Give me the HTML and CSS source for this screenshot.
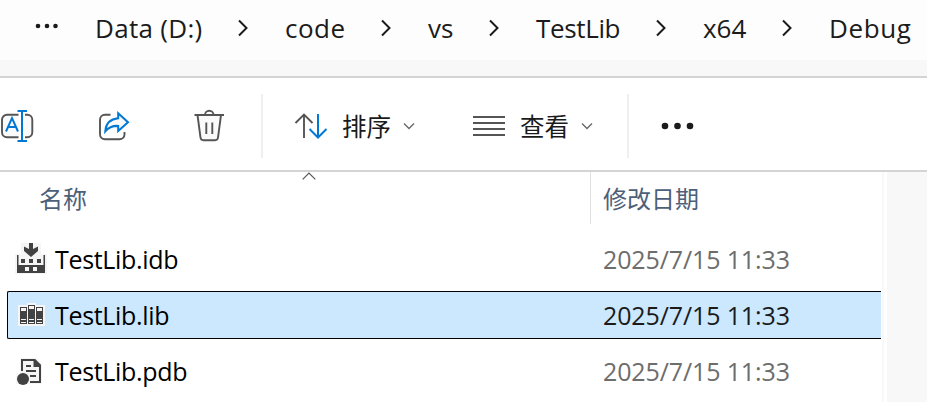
FILE: index.html
```
<!DOCTYPE html>
<html lang="zh-CN">
<head>
<meta charset="utf-8">
<title>Debug</title>
<link rel="stylesheet" href="styles.css">
</head>
<body>
<nav class="crumbs">
  <svg class="crumb-more" width="24" height="6" viewBox="0 0 24 6"><circle cx="3" cy="3" r="2.3"/><circle cx="12" cy="3" r="2.3"/><circle cx="20.5" cy="3" r="2.3"/></svg>
  <span class="crumb data">Data (D:)</span>
  <svg class="sep" width="12" height="18" viewBox="0 0 12 18"><path d="M2 1.5l7.5 7.5L2 16.5"/></svg>
  <span class="crumb code">code</span>
  <svg class="sep" width="12" height="18" viewBox="0 0 12 18"><path d="M2 1.5l7.5 7.5L2 16.5"/></svg>
  <span class="crumb vs">vs</span>
  <svg class="sep" width="12" height="18" viewBox="0 0 12 18"><path d="M2 1.5l7.5 7.5L2 16.5"/></svg>
  <span class="crumb testlib">TestLib</span>
  <svg class="sep" width="12" height="18" viewBox="0 0 12 18"><path d="M2 1.5l7.5 7.5L2 16.5"/></svg>
  <span class="crumb x64">x64</span>
  <svg class="sep" width="12" height="18" viewBox="0 0 12 18"><path d="M2 1.5l7.5 7.5L2 16.5"/></svg>
  <span class="crumb debug">Debug</span>
</nav>
<div class="band"></div>
<div class="toolbar">
  <svg class="icon rename" width="36" height="36" viewBox="0 0 36 36">
    <path class="gray fill" d="M18.5 6.8H7A5 5 0 0 0 2 11.8v12.4a5 5 0 0 0 5 5h11.5M25 6.8h2.3a5 5 0 0 1 5 5v12.4a5 5 0 0 1-5 5H25"/>
    <path class="blue" d="M17.5 3h9.5M17.5 33h9.5M22 3v30M6 23.5l6-13.3 6 13.3M8.2 19h7.6"/>
  </svg>
  <svg class="icon share" width="36" height="36" viewBox="0 0 36 36">
    <path class="gray" d="M14.5 6.8H9a5 5 0 0 0-5 5v14.5a5 5 0 0 0 5 5h14.5a5 5 0 0 0 5-5V24"/>
    <path class="blue fill" d="M22.2 5.3L32 14.3l-9.8 8.8v-5.2c-6-.3-9.600 1.600-12.900 5.400 .5-7.500 5.100-12.300 12.900-13z"/>
  </svg>
  <svg class="icon trash" width="36" height="36" viewBox="0 0 36 36">
    <path class="gray fill" d="M6.500 7l3 22.500a3 3 0 0 0 3 2.700h11.500a3 3 0 0 0 3-2.700L30 7"/>
    <path class="gray" d="M3.500 7h29.500M14 7a4.250 4.250 0 0 1 8.500 0M15.300 14.500v11.500M21.300 14.500v11.500"/>
  </svg>
  <div class="divider"></div>
  <svg class="icon sort" width="34" height="28" viewBox="0 0 34 28">
    <path class="gray" d="M10 26V2.500M1.500 11L10 2.500l8.500 8.500"/>
    <path class="blue" d="M24 2v23.500M15.500 17l8.500 8.500 8.500-8.500"/>
  </svg>
  <span class="label sort-label">排序</span>
  <svg class="drop" width="12" height="8" viewBox="0 0 12 8"><path d="M1 1.500l5 5 5-5"/></svg>
  <svg class="icon view" width="32" height="20" viewBox="0 0 32 20"><path class="lines" d="M0 1h32M0 7h32M0 13h32M0 19h32"/></svg>
  <span class="label view-label">查看</span>
  <svg class="drop" width="12" height="8" viewBox="0 0 12 8"><path d="M1 1.500l5 5 5-5"/></svg>
  <div class="divider second"></div>
  <svg class="more" width="34" height="8" viewBox="0 0 34 8"><circle cx="4" cy="4" r="3.300"/><circle cx="16.500" cy="4" r="3.300"/><circle cx="29" cy="4" r="3.300"/></svg>
</div>
<main class="content">
  <section class="files">
    <div class="head">
      <svg class="sort-mark" width="14" height="8" viewBox="0 0 14 8"><path d="M.7 7.300L7 1l6.300 6.300"/></svg>
      <span class="name-head">名称</span>
      <span class="date-head">修改日期</span>
    </div>
    <div class="row">
      <svg class="file-icon" width="32" height="32" viewBox="0 0 32 32">
        <path class="halo" d="M6 0h20v11h6v20H0V11h6z"/>
        <path class="ink" d="M14 0h4v6l5-2.500v4.500l-7 6-7-6V3.500L14 6zM2 12h1.500v10h25V12H30v18H2z"/>
        <path class="ink" d="M6 16h4v4H6zM14 16h4v4h-4zM22 16h4v4h-4z"/>
        <path class="halo" d="M10 24h4v4h-4zM18 24h4v4h-4z"/>
      </svg>
      <span class="name">TestLib.idb</span><span class="date">2025/7/15 11:33</span>
    </div>
    <div class="row selected">
      <svg class="file-icon" width="32" height="32" viewBox="0 0 32 32">
        <path class="halo" d="M3 6h9V4h9v2h9v21H3z"/>
        <path class="ink" d="M5 8h7v17H5zM13 6h7v19h-7zM21 8h7v17h-7z"/>
        <path class="halo" d="M6 9h5v3H6zM14 7h5v3h-5zM22 9h5v3h-5zM6 20h5v1H6zM14 20h5v1h-5zM22 20h5v1h-5zM6 23h5v1H6zM14 23h5v1h-5zM22 23h5v1h-5z"/>
      </svg>
      <span class="name">TestLib.lib</span><span class="date">2025/7/15 11:33</span>
    </div>
    <div class="row">
      <svg class="file-icon" width="32" height="32" viewBox="0 0 32 32">
        <path class="halo" d="M5 3h17l5 6v20H1v-9h4z"/>
        <path class="page" d="M7 16V5h12.500l5.500 5.500V27H15"/>
        <path class="ink" d="M18.500 4H20l6 6v2h-7.500zM11 10h5v2h-5zM11 15h10v2H11zM15 20h6v2h-6z"/>
        <circle class="ink" cx="8" cy="24" r="6"/>
      </svg>
      <span class="name">TestLib.pdb</span><span class="date">2025/7/15 11:33</span>
    </div>
  </section>
  <div class="gutter"></div>
  <aside class="pane"></aside>
</main>
</body>
</html>
```
FILE: styles.css
```
* { box-sizing: border-box; }
body {
  margin: 0;
  width: 927px;
  height: 402px;
  overflow: hidden;
  background: #fff;
  font-family: "Open Sans", "Noto Sans CJK SC", sans-serif;
}
svg { display: block; flex: none; fill: none; }
.crumbs {
  display: flex;
  align-items: center;
  height: 60px;
  padding: 0 0 4px 35px;
  background: #fdfdfd;
  color: #1b1b1b;
  font-size: 26px;
  line-height: 36px;
  white-space: nowrap;
}
.crumb { flex: none; }
.crumb-more { fill: #1b1b1b; margin: 0 36px 4px 0; }
.sep { stroke: #1b1b1b; stroke-width: 2; }
.data { width: 142px; letter-spacing: .3px; }
.code { width: 84px; margin-left: 36px; letter-spacing: .5px; }
.code + .sep { margin-left: 11px; }
.vs { width: 49px; margin-left: 36px; }
.vs + .sep { margin-left: 11px; }
.testlib { width: 108px; margin-left: 36px; letter-spacing: -.35px; }
.testlib + .sep { margin-left: 11px; }
.x64 { width: 67px; margin-left: 36px; }
.x64 + .sep { margin-left: 11px; }
.debug { margin-left: 36px; letter-spacing: .6px; }
.band { height: 18px; background: #f8f8f8; border-bottom: 2px solid #d4d4d4; }
.toolbar {
  display: flex;
  align-items: center;
  height: 94px;
  border-bottom: 2px solid #d4d4d4;
}
.gray { stroke: #555; stroke-width: 1.9; }
.blue { stroke: #0078d4; stroke-width: 2; }
.fill { fill: #fafafa; }
.lines { stroke: #555; stroke-width: 2; }
.rename { margin: 4px 0 0; }
.share { margin: 4px 0 0 60px; }
.trash { margin: 4px 0 0 59px; }
.divider { width: 2px; height: 64px; margin: 3px 0 0 34px; background: #efefef; }
.sort { margin: 4px 0 0 31px; }
.label { font-size: 24.5px; line-height: 36px; color: #1b1b1b; font-family: "Noto Sans CJK SC", sans-serif; width: 48px; flex: none; white-space: nowrap; }
.sort-label { margin: 4px 0 0 14px; }
.drop { margin: 4px 0 0 13px; stroke: #666; stroke-width: 1.3; }
.view { margin: 4px 0 0 58px; }
.view-label { margin: 4px 0 0 15px; }
.second { margin-left: 34px; }
.more { fill: #1b1b1b; margin: 4px 0 0 32px; }
.content { display: flex; height: 230px; }
.files { width: 882px; padding-left: 7px; }
.head {
  position: relative;
  display: flex;
  height: 52px;
  margin-bottom: 11px;
  color: #4c607a;
  font: 24px/52px "Noto Sans CJK SC", sans-serif;
}
.sort-mark { position: absolute; left: 294.5px; top: 0; stroke: #555; stroke-width: 1.2; }
.name-head { width: 583px; padding-left: 32px; }
.date-head { flex: 1; padding-left: 12px; border-left: 1px solid #e0e0e0; }
.row {
  display: flex;
  align-items: center;
  width: 874px;
  height: 48px;
  margin-bottom: 8px;
  border: 1px solid transparent;
  border-right: 0;
  border-radius: 2px 0 0 2px;
  font-size: 25px;
  line-height: 36px;
  white-space: nowrap;
}
.selected { background: #cce8ff; border-color: #000; }
.file-icon { margin: 0 0 0 7px; }
.halo { fill: #f5f5f5; }
.ink { fill: #424242; }
.page { stroke: #424242; stroke-width: 2; }
.name { width: 548px; margin-left: 8px; color: #000; letter-spacing: -.33px; }
.date { color: #6d6d6d; letter-spacing: -.12px; }
.selected .date { color: #1b1b1b; }
.gutter { width: 5px; border-left: 2px solid #f8f8f8; }
.pane { flex: 1; background: #f8f8f8; }
```
